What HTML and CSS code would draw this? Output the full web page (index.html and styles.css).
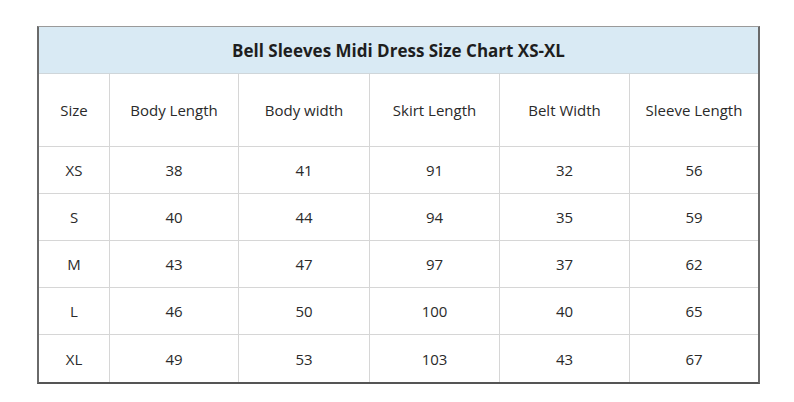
FILE: index.html
```html
<!DOCTYPE html>
<html>
<head>
<meta charset="utf-8">
<link rel="stylesheet" href="styles.css">
</head>
<body>
<div class="chart">
  <div class="title">Bell Sleeves Midi Dress Size Chart XS-XL</div>
  <div class="grid">
    <div class="cell head">Size</div><div class="cell head">Body Length</div><div class="cell head">Body width</div><div class="cell head">Skirt Length</div><div class="cell head">Belt Width</div><div class="cell head">Sleeve Length</div>
    <div class="cell">XS</div><div class="cell">38</div><div class="cell">41</div><div class="cell">91</div><div class="cell">32</div><div class="cell">56</div>
    <div class="cell">S</div><div class="cell">40</div><div class="cell">44</div><div class="cell">94</div><div class="cell">35</div><div class="cell">59</div>
    <div class="cell">M</div><div class="cell">43</div><div class="cell">47</div><div class="cell">97</div><div class="cell">37</div><div class="cell">62</div>
    <div class="cell">L</div><div class="cell">46</div><div class="cell">50</div><div class="cell">100</div><div class="cell">40</div><div class="cell">65</div>
    <div class="cell">XL</div><div class="cell">49</div><div class="cell">53</div><div class="cell">103</div><div class="cell">43</div><div class="cell">67</div>
  </div>
</div>
</body>
</html>
```

FILE: styles.css
```css
html, body {
  margin: 0;
  padding: 0;
  background: #ffffff;
}
body {
  padding: 26px 0 0 37px;
  font-family: "Open Sans", "Liberation Sans", sans-serif;
  color: #2a2a2a;
}
.chart {
  width: 723px;
  box-sizing: border-box;
  border-left: 2px solid #6a6a6a;
  border-right: 2px solid #6a6a6a;
  border-bottom: 2px solid #555;
  border-top: 1px solid #9a9a9a;
}
.title {
  height: 46px;
  background: #d9eaf4;
  display: flex;
  align-items: center;
  justify-content: center;
  font-weight: 700;
  font-size: 17px;
  color: #1e1e1e;
  border-bottom: 1px solid #cfd6da;
}
.grid {
  display: grid;
  grid-template-columns: 71px 129px 131px 130px 130px 1fr;
  grid-template-rows: 73px repeat(5, 47px);
}
.cell {
  display: flex;
  align-items: center;
  justify-content: center;
  font-size: 15px;
  border-right: 1px solid #d6d6d6;
  border-bottom: 1px solid #d6d6d6;
}
.cell:nth-child(6n) {
  border-right: none;
}
.cell:nth-last-child(-n+6) {
  border-bottom: none;
}
```
